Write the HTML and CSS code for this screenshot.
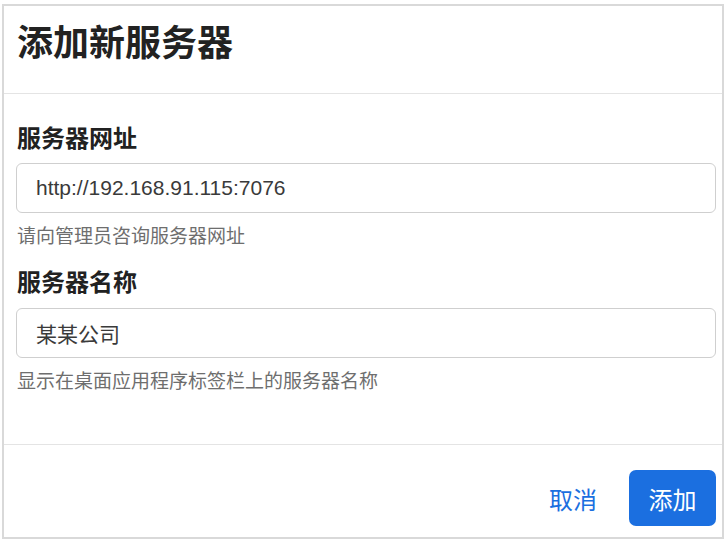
FILE: index.html
```html
<!DOCTYPE html>
<html lang="zh-CN">
<head>
    <meta charset="utf-8">
    <link rel="stylesheet" href="styles.css">
</head>
<body>
    <div class="dialog">
        <div class="dialogHeader">
            <h1 class="dialogTitle">添加新服务器</h1>
        </div>
        <div class="dialogBody">
            <label class="fieldLabel" for="serverUrl">服务器网址</label>
            <input class="fieldInput" id="serverUrl" type="text" value="http://192.168.91.115:7076">
            <div class="fieldHelp">请向管理员咨询服务器网址</div>

            <label class="fieldLabel second" for="serverName">服务器名称</label>
            <input class="fieldInput" id="serverName" type="text" value="某某公司">
            <div class="fieldHelp">显示在桌面应用程序标签栏上的服务器名称</div>
        </div>
        <div class="dialogFooter">
            <button class="cancelButton">取消</button>
            <button class="addButton">添加</button>
        </div>
    </div>
</body>
</html>
```

FILE: styles.css
```css
body {
    margin: 0;
    width: 728px;
    height: 542px;
    overflow: hidden;
    background-color: #ffffff;
    font-family: "Liberation Sans", "Noto Sans CJK SC", sans-serif;
    color: #222222;
}

.dialog {
    box-sizing: border-box;
    margin: 4px 4px 3px 2px;
    width: 722px;
    height: 535px;
    border: 2px solid #d9d9d9;
    display: flex;
    flex-direction: column;
}

.dialogHeader {
    box-sizing: border-box;
    height: 88px;
    padding: 16px 6px 0 13px;
    border-bottom: 1px solid #e4e4e4;
}

.dialogTitle {
    margin: 0;
    font-size: 36px;
    line-height: 43px;
    font-weight: 600;
    color: #222222;
}

.dialogBody {
    box-sizing: border-box;
    height: 351px;
    padding: 27px 6px 0 12px;
    display: flex;
    flex-direction: column;
    border-bottom: 1px solid #e4e4e4;
}

.fieldLabel {
    font-size: 24px;
    line-height: 36px;
    font-weight: 600;
    color: #212121;
    margin-bottom: 6px;
    padding-left: 1px;
}

.fieldLabel.second {
    margin-top: 14px;
    margin-bottom: 7px;
}

.fieldInput {
    box-sizing: border-box;
    height: 50px;
    width: 100%;
    margin: 0;
    padding: 0 19px;
    border: 1px solid #cfcfcf;
    border-radius: 6px;
    font-family: "Liberation Sans", "Noto Sans CJK SC", sans-serif;
    font-size: 21px;
    color: #3a3a3a;
    background-color: #ffffff;
    outline: none;
}

.fieldHelp {
    margin-top: 10px;
    font-size: 19px;
    line-height: 28px;
    color: #6e6e6e;
    padding-left: 1px;
}

.dialogFooter {
    flex: 1;
    display: flex;
    justify-content: flex-end;
    align-items: flex-start;
    padding: 25px 6px 0 12px;
    gap: 16px;
}

.cancelButton {
    height: 56px;
    padding: 0 16px;
    border: none;
    background: none;
    font-family: "Liberation Sans", "Noto Sans CJK SC", sans-serif;
    font-size: 24px;
    color: #1b6fe0;
}

.addButton {
    width: 87px;
    height: 56px;
    padding: 0;
    border: none;
    border-radius: 7px;
    background-color: #1b6fe0;
    color: #ffffff;
    font-family: "Liberation Sans", "Noto Sans CJK SC", sans-serif;
    font-size: 24px;
}
```
